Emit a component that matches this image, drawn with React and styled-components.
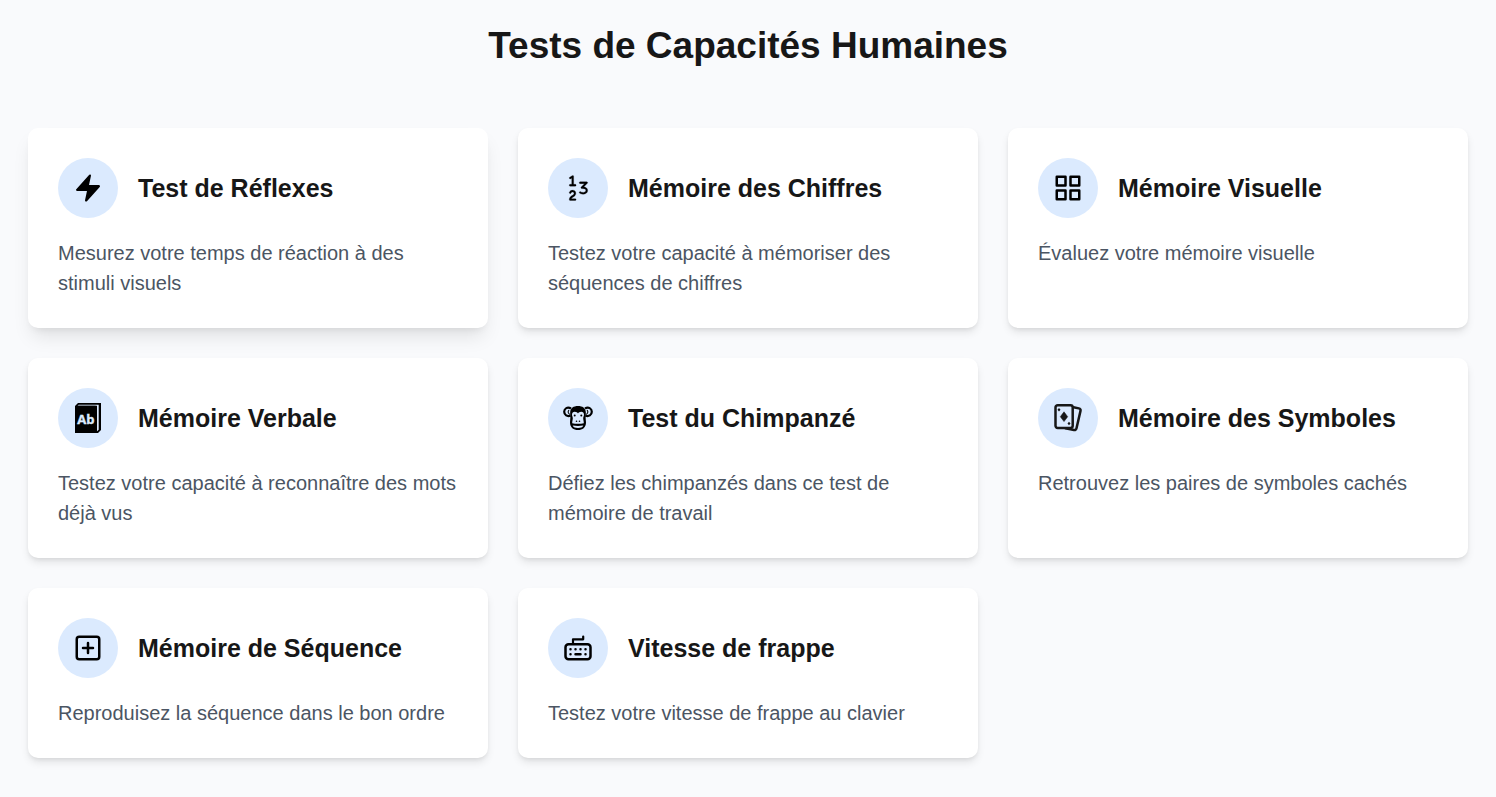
import React from "react";
import styled, { createGlobalStyle } from "styled-components";
import { HiMiniBolt } from "react-icons/hi2";
import { GoNumber } from "react-icons/go";
import { FiGrid, FiPlusSquare } from "react-icons/fi";

const GlobalStyle = createGlobalStyle`
  *, *::before, *::after { box-sizing: border-box; }
  body {
    margin: 0;
    background: #f9fafc;
    color: #171717;
    font-family: "Liberation Sans", Arial, Helvetica, sans-serif;
  }
`;

const Page = styled.main`
  max-width: 1496px;
  margin: 0 auto;
  padding: 22px 28px 39px;
`;

const PageTitle = styled.h1`
  margin: 0 0 58px;
  font-size: 37px;
  line-height: 48px;
  font-weight: 700;
  text-align: center;
`;

const Grid = styled.div`
  display: grid;
  grid-template-columns: repeat(auto-fill, minmax(min(100%, 400px), 1fr));
  gap: 30px;
`;

const Card = styled.a`
  display: block;
  padding: 30px;
  border-radius: 10px;
  background: #fff;
  color: inherit;
  text-decoration: none;
  box-shadow: ${({ $raised }) =>
    $raised
      ? "0 12px 19px -4px rgba(0, 0, 0, 0.1), 0 5px 8px -5px rgba(0, 0, 0, 0.1)"
      : "0 5px 8px -1px rgba(0, 0, 0, 0.1), 0 2px 5px -2px rgba(0, 0, 0, 0.1)"};
`;

const CardHeader = styled.div`
  display: flex;
  align-items: center;
  gap: 20px;
  margin-bottom: 20px;
`;

const IconCircle = styled.span`
  display: flex;
  flex: none;
  align-items: center;
  justify-content: center;
  width: 60px;
  height: 60px;
  border-radius: 50%;
  background: #dbeafe;
  color: #000;

  svg {
    width: 30px;
    height: 30px;
  }
`;

const CardTitle = styled.h2`
  margin: 0;
  font-size: 25px;
  line-height: 35px;
  font-weight: 700;
`;

const Description = styled.p`
  margin: 0;
  font-size: 20px;
  line-height: 30px;
  color: #4b5563;
`;

const BoldNumber = styled(GoNumber)`
  stroke: currentColor;
  stroke-width: 0.2px;
`;

const BookLetters = styled.text`
  font-family: "Open Sans", "Noto Sans", sans-serif;
  font-size: 13px;
  font-weight: 700;
  fill: #dbeafe;
  stroke: #dbeafe;
  stroke-width: 0.4px;
`;

const DictionaryIcon = () => (
  <svg viewBox="0 0 30 30" aria-hidden="true">
    <path d="M5 0h23v27l-3 3H2V3z" fill="currentColor" />
    <path d="M4.500 2.700L5.600 1.700H25.700V26.800L24 28.300V2.700z" fill="#dbeafe" />
    <path d="M4 2.700H22.700V30H2V4z" fill="currentColor" />
    <BookLetters x="12.800" y="21" textAnchor="middle">Ab</BookLetters>
  </svg>
);

const ChimpIcon = () => (
  <svg viewBox="0 0 30 30" fill="none" aria-hidden="true">
    <g stroke="currentColor" strokeWidth="2.200">
      <path d="M8 5.500C4.500 3.300 1.200 5.600 1.200 8.800c0 3.300 3 5 6.300 3.900M22 5.500c3.500-2.200 6.800.1 6.800 3.300 0 3.300-3 5-6.300 3.900" />
      <path d="M6 7c-1.300 1.500-1.200 3 .8 4.500M24 7c1.300 1.500 1.200 3-.8 4.500" strokeWidth="1.100" />
    </g>
    <path d="M15 3c4.500 0 7.500 2 7.800 6v4c-.5 2 .2 4 .2 6.500 0 5-3.500 7.500-8 7.500s-8-2.500-8-7.500c0-2.500.7-4.500.2-6.500V9c.3-4 3.300-6 7.800-6z" fill="currentColor" />
    <path d="M11.800 8.800c1.600 0 2.600.8 3.200 1.800.6-1 1.600-1.800 3.200-1.800 1.800 0 2.800 1.300 2.800 3 0 1.500-.9 2.200-.8 3.700.1 1.500.6 2.700.6 4.700-3.500.7-8.100.7-11.600 0 0-2 .5-3.200.6-4.700.1-1.500-.8-2.200-.8-3.700 0-1.700 1-3 2.800-3z" fill="#dbeafe" />
    <path d="M9.700 22.500q5.300.8 10.600 0c-.6 1.800-2.700 2.500-5.300 2.500s-4.700-.7-5.300-2.500z" fill="#dbeafe" />
    <g fill="currentColor">
      <circle cx="11.700" cy="12.400" r="1" />
      <circle cx="18.300" cy="12.400" r="1" />
      <circle cx="13.500" cy="18.300" r=".8" />
      <circle cx="16.500" cy="18.300" r=".8" />
    </g>
  </svg>
);

const CardsIcon = () => (
  <svg viewBox="0 0 30 30" fill="none" stroke="#171717" strokeWidth="2.500" aria-hidden="true">
    <path d="M20.500 4.300l5.300 1.100c1.300.3 2 1.200 1.700 2.500l-4 17.400c-.3 1.300-1.300 2-2.500 1.700L12.500 25.200" strokeLinecap="round" />
    <rect x="2.500" y="2.300" width="17.200" height="22.600" rx="2.200" fill="#dbeafe" />
    <path d="M11 8.800l3.700 4.900-3.700 4.900-3.700-4.900z" fill="#171717" stroke="#171717" strokeWidth=".5" />
    <path d="M6 5.100l1.500 1.700L6 8.500 4.500 6.800zM16 18.800l1.500 1.700-1.500 1.700-1.500-1.700z" fill="#171717" stroke="none" />
  </svg>
);

const KeyboardIcon = () => (
  <svg viewBox="0 0 30 30" fill="none" stroke="currentColor" strokeWidth="2.500" strokeLinecap="round" strokeLinejoin="round" aria-hidden="true">
    <rect x="2.500" y="11.300" width="25" height="15" rx="3" />
    <path d="M10 11V6.300h10.200V3.500" strokeWidth="2.200" />
    <path d="M12.500 21.200h5M7.500 21.200h.01M22.500 21.200h.01M7.500 16.300h.01M12.500 16.300h.01M17.500 16.300h.01M22.500 16.300h.01" />
  </svg>
);

const tests = [
  { title: "Test de Réflexes", text: "Mesurez votre temps de réaction à des stimuli visuels", icon: HiMiniBolt, href: "#reflexes", raised: true },
  { title: "Mémoire des Chiffres", text: "Testez votre capacité à mémoriser des séquences de chiffres", icon: BoldNumber, href: "#chiffres" },
  { title: "Mémoire Visuelle", text: "Évaluez votre mémoire visuelle", icon: FiGrid, href: "#visuelle" },
  { title: "Mémoire Verbale", text: "Testez votre capacité à reconnaître des mots déjà vus", icon: DictionaryIcon, href: "#verbale" },
  { title: "Test du Chimpanzé", text: "Défiez les chimpanzés dans ce test de mémoire de travail", icon: ChimpIcon, href: "#chimpanze" },
  { title: "Mémoire des Symboles", text: "Retrouvez les paires de symboles cachés", icon: CardsIcon, href: "#symboles" },
  { title: "Mémoire de Séquence", text: "Reproduisez la séquence dans le bon ordre", icon: FiPlusSquare, href: "#sequence" },
  { title: "Vitesse de frappe", text: "Testez votre vitesse de frappe au clavier", icon: KeyboardIcon, href: "#frappe" },
];

export default function App() {
  return (
    <>
      <GlobalStyle />
      <Page>
        <PageTitle>Tests de Capacités Humaines</PageTitle>
        <Grid>
          {tests.map(({ title, text, icon: Icon, href, raised }) => (
            <Card key={title} href={href} $raised={raised}>
              <CardHeader>
                <IconCircle>
                  <Icon />
                </IconCircle>
                <CardTitle>{title}</CardTitle>
              </CardHeader>
              <Description>{text}</Description>
            </Card>
          ))}
        </Grid>
      </Page>
    </>
  );
}
